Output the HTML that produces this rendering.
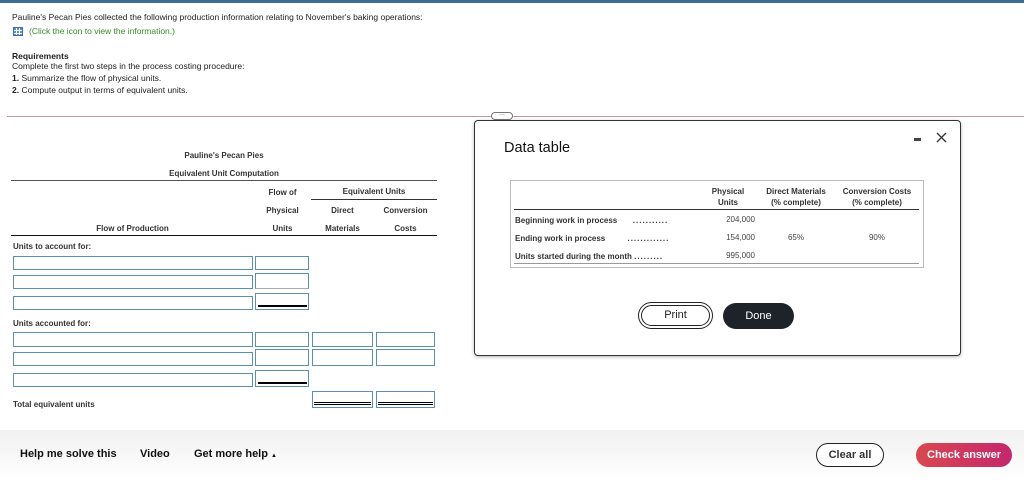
<!DOCTYPE html>
<html><head><meta charset="utf-8"><style>
*{margin:0;padding:0;box-sizing:border-box}
body{width:1024px;height:482px;position:relative;overflow:hidden;background:#fff;font-family:"Liberation Sans",Arial,sans-serif;color:#222}
.a{position:absolute;white-space:nowrap}
.s{font-size:8.5px}
.b{font-weight:bold}
.t{font-size:8px;font-weight:bold;color:#333;text-align:center}
.in{position:absolute;border:1px solid #5a8fb0;background:#fff}
.ln{position:absolute;background:#333}
</style></head><body>
<div class="a" style="left:0;top:0;width:1024px;height:3px;background:#3c6e91"></div>
<div class="a s" style="left:12px;top:12px">Pauline's Pecan Pies collected the following production information relating to November's baking operations:</div>
<div class="a" style="left:13px;top:27px;width:10px;height:9px;background:#5b8fd6;border:1px solid #3a6fb8;background-image:linear-gradient(#fff 0 0),linear-gradient(#fff 0 0),linear-gradient(#fff 0 0),linear-gradient(#fff 0 0);background-size:100% 1px,100% 1px,1px 100%,1px 100%;background-position:0 2px,0 5px,2px 0,5px 0;background-repeat:no-repeat"></div>
<div class="a s" style="left:29px;top:26px;color:#3a8a2a">(Click the icon to view the information.)</div>
<div class="a s b" style="left:12px;top:51px">Requirements</div>
<div class="a s" style="left:12px;top:61px">Complete the first two steps in the process costing procedure:</div>
<div class="a s" style="left:12px;top:73px"><b>1.</b> Summarize the flow of physical units.</div>
<div class="a s" style="left:12px;top:85px"><b>2.</b> Compute output in terms of equivalent units.</div>
<div class="a" style="left:7px;top:116px;width:1017px;height:1px;background:#b89aa6"></div>
<div class="a" style="left:491px;top:112px;width:22px;height:8px;border:1px solid #777;border-radius:4px;background:#fff;font-size:6px;line-height:4px;text-align:center;color:#333">···</div>

<!-- left table -->
<div class="a t" style="left:124px;top:151px;width:200px">Pauline's Pecan Pies</div>
<div class="a t" style="left:124px;top:169px;width:200px">Equivalent Unit Computation</div>
<div class="ln" style="left:11px;top:180px;width:426px;height:1px;background:#555"></div>
<div class="a t" style="left:255px;top:188px;width:55px">Flow of</div>
<div class="a t" style="left:311px;top:187px;width:126px">Equivalent Units</div>
<div class="ln" style="left:311px;top:199px;width:126px;height:1px"></div>
<div class="a t" style="left:255px;top:206px;width:55px">Physical</div>
<div class="a t" style="left:312px;top:206px;width:61px">Direct</div>
<div class="a t" style="left:374px;top:206px;width:63px">Conversion</div>
<div class="a t" style="left:40px;top:224px;width:185px">Flow of Production</div>
<div class="a t" style="left:255px;top:224px;width:55px">Units</div>
<div class="a t" style="left:312px;top:224px;width:61px">Materials</div>
<div class="a t" style="left:374px;top:224px;width:63px">Costs</div>
<div class="ln" style="left:11px;top:235px;width:426px;height:1px;background:#111"></div>
<div class="a t" style="left:13px;top:242px;text-align:left">Units to account for:</div>
<div class="in" style="left:13px;top:256px;width:240px;height:14px"></div>
<div class="in" style="left:255px;top:256px;width:54px;height:14px"></div>
<div class="in" style="left:13px;top:275px;width:240px;height:14px"></div>
<div class="in" style="left:255px;top:273px;width:54px;height:16px;border-bottom-color:#aaa"></div>
<div class="in" style="left:13px;top:296px;width:240px;height:14px"></div>
<div class="in" style="left:255px;top:293px;width:54px;height:17px"></div>
<div class="ln" style="left:258px;top:305px;width:49px;height:2px;background:#000"></div>
<div class="a t" style="left:13px;top:319px;text-align:left">Units accounted for:</div>
<div class="in" style="left:13px;top:332px;width:240px;height:15px"></div>
<div class="in" style="left:255px;top:332px;width:54px;height:15px"></div>
<div class="in" style="left:312px;top:332px;width:61px;height:15px"></div>
<div class="in" style="left:376px;top:332px;width:59px;height:15px"></div>
<div class="in" style="left:13px;top:352px;width:240px;height:14px"></div>
<div class="in" style="left:255px;top:349px;width:54px;height:17px"></div>
<div class="in" style="left:312px;top:349px;width:61px;height:17px"></div>
<div class="in" style="left:376px;top:349px;width:59px;height:17px"></div>
<div class="in" style="left:13px;top:373px;width:240px;height:14px"></div>
<div class="in" style="left:255px;top:370px;width:54px;height:17px"></div>
<div class="ln" style="left:258px;top:382px;width:49px;height:2px;background:#000"></div>
<div class="a t" style="left:13px;top:400px;text-align:left">Total equivalent units</div>
<div class="in" style="left:312px;top:391px;width:61px;height:17px"></div>
<div class="in" style="left:376px;top:391px;width:59px;height:17px"></div>
<div class="ln" style="left:314px;top:402px;width:57px;height:1px;background:#000"></div>
<div class="ln" style="left:314px;top:404px;width:57px;height:1px;background:#000"></div>
<div class="ln" style="left:378px;top:402px;width:55px;height:1px;background:#000"></div>
<div class="ln" style="left:378px;top:404px;width:55px;height:1px;background:#000"></div>

<!-- modal -->
<div class="a" style="left:474px;top:120px;width:487px;height:236px;border:1.5px solid #333;border-radius:4px;background:#fff;box-shadow:0 1px 3px rgba(0,0,0,.3)"></div>
<div class="a" style="left:504px;top:140px;font-size:14.5px;color:#111">Data table</div>
<div class="a" style="left:914px;top:138px;width:7px;height:3px;background:#444"></div>
<svg class="a" style="left:936px;top:132px" width="11" height="11"><path d="M1 1L10 10M10 1L1 10" stroke="#333" stroke-width="1.3"/></svg>
<div class="a" style="left:510px;top:180px;width:414px;height:88px;border:1px solid #bbb"></div>
<div class="ln" style="left:514px;top:209px;width:405px;height:1px"></div>
<div class="ln" style="left:514px;top:263px;width:405px;height:1px;background:#999"></div>
<div class="a t" style="left:700px;top:186px;width:56px;line-height:11px;font-size:8px">Physical<br>Units</div>
<div class="a t" style="left:758px;top:186px;width:76px;line-height:11px;font-size:8px">Direct Materials<br>(% complete)</div>
<div class="a t" style="left:835px;top:186px;width:84px;line-height:11px;font-size:8px">Conversion Costs<br>(% complete)</div>
<div class="a t" style="left:515px;top:216px;text-align:left">Beginning work in process &nbsp;&nbsp;&nbsp;&nbsp;&nbsp;&nbsp;<span style="letter-spacing:1px">...........</span></div>
<div class="a t" style="left:515px;top:234px;text-align:left">Ending work in process &nbsp;&nbsp;&nbsp;&nbsp;&nbsp;&nbsp;&nbsp;&nbsp;&nbsp;<span style="letter-spacing:1px">.............</span></div>
<div class="a t" style="left:515px;top:252px;text-align:left">Units started during the month <span style="letter-spacing:1px">.........</span></div>
<div class="a" style="left:700px;top:215px;width:55px;text-align:right;font-size:8px;color:#444">204,000</div>
<div class="a" style="left:700px;top:233px;width:55px;text-align:right;font-size:8px;color:#444">154,000</div>
<div class="a" style="left:700px;top:251px;width:55px;text-align:right;font-size:8px;color:#444">995,000</div>
<div class="a" style="left:758px;top:233px;width:76px;text-align:center;font-size:8px;color:#444">65%</div>
<div class="a" style="left:835px;top:233px;width:84px;text-align:center;font-size:8px;color:#444">90%</div>
<div class="a" style="left:638px;top:302px;width:75px;height:27px;border:1px solid #222;border-radius:14px;padding:2px"><div style="border:1.5px solid #222;border-radius:12px;height:100%;font-size:11px;text-align:center;line-height:18px">Print</div></div>
<div class="a" style="left:723px;top:303px;width:71px;height:26px;border-radius:13px;background:#1e2329;color:#fff;font-size:11px;text-align:center;line-height:26px">Done</div>

<!-- footer -->
<div class="a" style="left:0;top:430px;width:1024px;height:52px;background:linear-gradient(#f1f1f1,#fff)"></div>
<div class="a b" style="left:20px;top:448px;font-size:11px;color:#111">Help me solve this</div>
<div class="a b" style="left:140px;top:448px;font-size:11px;color:#111">Video</div>
<div class="a b" style="left:194px;top:448px;font-size:11px;color:#111">Get more help <span style="font-size:6px">▲</span></div>
<div class="a b" style="left:816px;top:443px;width:68px;height:24px;border:1.5px solid #222;border-radius:12px;background:#fff;font-size:11px;text-align:center;line-height:22px;color:#333">Clear all</div>
<div class="a b" style="left:916px;top:443px;width:96px;height:24px;border-radius:12px;background:linear-gradient(90deg,#d9484f,#c5266e);font-size:11px;text-align:center;line-height:24px;color:#fff">Check answer</div>
</body></html>
